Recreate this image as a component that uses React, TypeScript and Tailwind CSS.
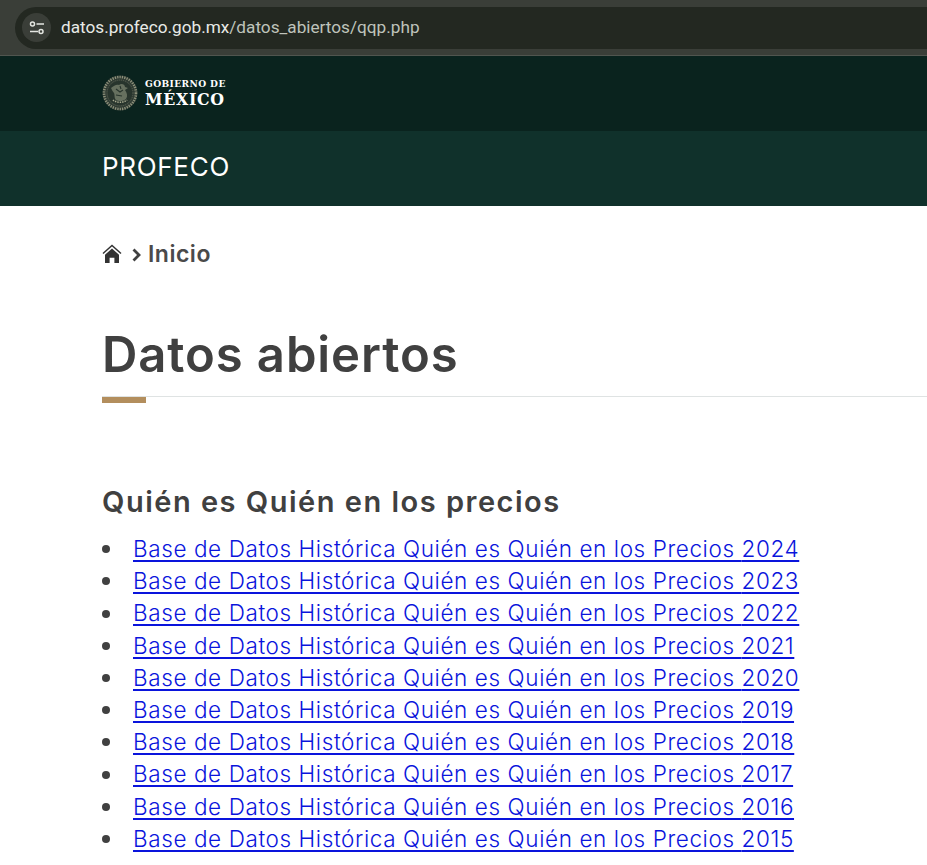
const years = [2024, 2023, 2022, 2021, 2020, 2019, 2018, 2017, 2016, 2015];

function Seal() {
  return (
    <svg width="36" height="36" viewBox="0 0 36 36" fill="none" className="-mt-[2px]">
      <circle cx="18" cy="18" r="17.5" fill="#2f3b33" />
      <circle cx="18" cy="18" r="16" stroke="#8d917b" strokeWidth="2.6" strokeDasharray="1.3 1.1" />
      <circle cx="18" cy="18" r="13" stroke="#5b6354" strokeWidth="1" strokeDasharray="1 1" />
      <circle cx="18" cy="18" r="12" fill="#28352d" />
      <path d="M9 13c3-2 5-4 8-3 2-2 6-1 6 2l3 1-3 2c2 3 3 6 1 9-2 2-7 3-10 1-2-2-1-5-2-7-1-1-2-3-3-5Z" fill="#66705f" />
      <path d="M11 25c3 3 11 3 14 0" stroke="#a7a98f" strokeWidth="1.6" strokeDasharray="1.4 1" />
      <path d="M14 14l4 3 3-2M14 20l6 1M18 11l1 3" stroke="#28352d" strokeWidth="1.1" />
    </svg>
  );
}

function HomeIcon() {
  return (
    <svg width="20" height="20" viewBox="0 0 20 20">
      <path d="M1 9.5 10 1.5l9 8" fill="none" stroke="#333" strokeWidth="1.5" />
      <path d="M10 4.5 17 10.7V19h-4.6v-5.2H7.6V19H3v-8.3Z" fill="#333" />
    </svg>
  );
}

export default function App() {
  return (
    <div className="h-[865px] overflow-hidden bg-white font-['Inter',sans-serif]">
      {/* browser bar */}
      <div className="flex h-14 items-center border-b border-[#51554f] bg-[#3a3e38] pl-[15px]">
        <div className="flex h-[42px] flex-1 items-center gap-[10px] rounded-l-full bg-[#232821] pl-[7px]">
          <div className="flex h-[29px] w-[29px] items-center justify-center rounded-full bg-[#3a3e38]">
            <svg width="16" height="14" viewBox="0 0 16 14" fill="none" stroke="#e4e6e1" strokeWidth="1.5">
              <circle cx="3.5" cy="3" r="2" />
              <path d="M7.5 3H15M1 10.5h8" />
              <circle cx="12" cy="10.5" r="2" />
            </svg>
          </div>
          <div className="font-['Roboto',sans-serif] text-[17.2px] text-[#bfc3bb]">
            <span className="text-[#e8eae6]">datos.profeco.gob.mx</span>/datos_abiertos/qqp.php
          </div>
        </div>
      </div>

      {/* gobierno */}
      <div className="flex h-[75px] items-center gap-[7px] bg-[#0a231e] pl-[102px]">
        <Seal />
        <div className="font-['DejaVu_Serif',serif] font-bold text-white">
          <div className="text-[9.1px] leading-[12px] tracking-[0.4px]">GOBIERNO DE</div>
          <div className="text-[15.8px] leading-[19px] tracking-[0.7px]">MÉXICO</div>
        </div>
      </div>
      <div className="flex h-[75px] items-center bg-[#10312b] pb-1 pl-[102px] text-[26px] tracking-[0.7px] text-white">PROFECO</div>

      <div className="pl-[102px]">
        {/* breadcrumb */}
        <div className="mt-[34px] flex h-7 items-center text-[23px] font-semibold tracking-[0.5px] text-[#4a4a4a]">
          <HomeIcon />
          <svg width="9" height="14" viewBox="0 0 9 14" className="ml-[10px] mr-[7px] mt-[2px]" fill="none" stroke="#404040" strokeWidth="2.8">
            <path d="M1.5 1.5 7 7l-5.5 5.5" />
          </svg>
          <span>Inicio</span>
        </div>

        <h1 className="mt-[57px] text-[49px] font-semibold leading-[60px] tracking-[0.9px] text-[#404040]">Datos abiertos</h1>
        <div className="relative mt-[11px] h-px bg-[#dfe3e3]">
          <div className="absolute left-0 top-px h-[6px] w-[44px] bg-[#b38e5d]" />
        </div>

        <h2 className="mt-[87px] text-[29px] font-semibold leading-9 tracking-[1.5px] text-[#404040]">Quién es Quién en los precios</h2>
        <ul className="mt-[13px] text-[22.5px] font-light leading-[32.2px] tracking-[0.6px]">
          {years.map((y) => (
            <li key={y} className="flex items-center">
              <span className="mr-[23px] h-2 w-2 rounded-full bg-[#404040]" />
              <a href="#" className="whitespace-nowrap text-[#0a14dc] underline decoration-2 underline-offset-[3px]">
                Base de Datos Histórica Quién es Quién en los Precios {y}
              </a>
            </li>
          ))}
        </ul>
      </div>
    </div>
  );
}
